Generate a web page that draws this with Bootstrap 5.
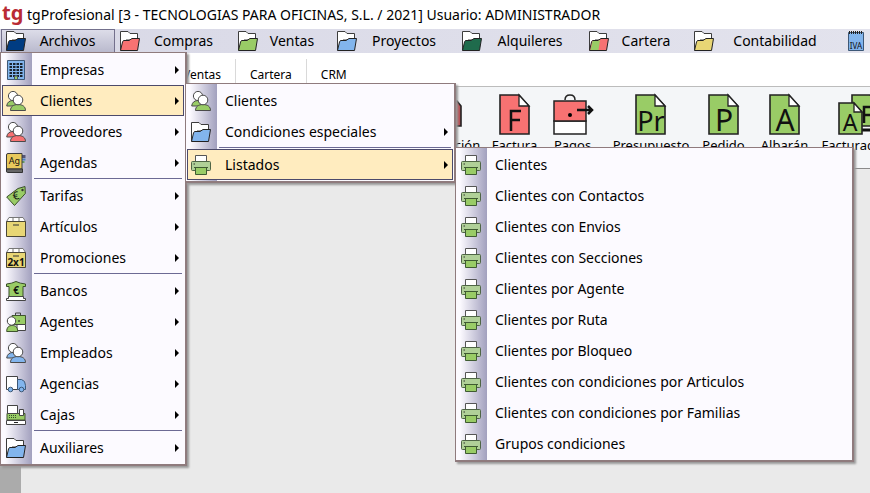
<!DOCTYPE html>
<html lang="es">
<head>
<meta charset="utf-8">
<meta name="viewport" content="width=device-width, initial-scale=1">
<title>tgProfesional</title>
<link href="https://cdn.jsdelivr.net/npm/bootstrap@5.3.0/dist/css/bootstrap.min.css" rel="stylesheet">
<style>
:root { --edge: #8f7b7d; --navy: #4c4a6b; }
body { font-family: "Noto Sans", "Open Sans", sans-serif; font-size: 14px; line-height: 20px; color: #000; background: #eaeaea; overflow: hidden; }
button { font: inherit; color: inherit; background: none; border: 0; padding: 0; white-space: nowrap; }
svg { display: block; flex: none; overflow: visible; }
.ico { width: 20px; height: 20px; }
.navy { color: #003c82; } .red { color: #f77272; } .green { color: #99cc66; } .blue { color: #82b5ed; } .pine { color: #1f6b4c; } .yellow { color: #e8d675; }
.ico text, .ribbon text { fill: #111; }
.titlebar { height: 29px; background: #fff; gap: 4px; padding-left: 2px; }
.titlebar h1 { font-size: 14px; line-height: 20px; font-weight: 400; }
.brand { width: 21px; font-size: 20px; line-height: 28px; padding-bottom: 4px; font-weight: 700; color: #b92b34; }
.menubar { height: 24px; display: grid; grid-template-columns: 114px 118px 99px 125px 127px 105px 153px 28px; padding-left: 1px; background: linear-gradient(90deg, #d8d8e6, #e3e3ed); }
.menubar button { display: flex; align-items: center; padding-left: 5px; height: 24px; }
.menubar button span { flex: 1; text-align: center; padding-right: 6px; }
.menubar .opened { box-shadow: inset 0 0 0 1px #73708c; background: linear-gradient(#dedeea, #b8b8cc); }
.tabstrip { height: 34px; background: #fff; border-bottom: 1px solid #bcbcbc; padding: 6px 0 3px 169px; font-size: 12px; }
.tabstrip button { padding: 6px 14px 0; border-right: 1px solid #d9d9d9; }
.tabstrip button:last-child { border: 0; }
.ribbon { height: 82px; background: #f4f6f8; border-bottom: 1px solid #8a8a8a; padding: 6px 0 0 414px; font-size: 13px; line-height: 16px; overflow: hidden; }
.ribbon button { display: flex; flex-direction: column; align-items: center; flex: none; gap: 2px; height: 64px; }
.ribbon svg { height: 42px; }
.w-s { width: 55px; } .w-m { width: 61px; } .w-l { width: 70px; } .w-xl { width: 84px; }
.rule { width: 1px; height: 68px; background: #bfc1c3; margin: 0 9px 0 0; }
.side { width: 21px; background: #ababab; }
.menu-pane { position: absolute; z-index: 5; list-style: none; margin: 0; padding: 1px; background: linear-gradient(90deg, #fcfaff 4px, #a2a0be 31px, #fcfaff 31px); border: 1px solid var(--edge); border-right-width: 2px; border-bottom-width: 2px; box-shadow: 2px 2px 2px #999; }
.menu-pane li { position: relative; }
.menu-pane button { width: 100%; height: 31px; display: flex; align-items: center; padding: 0 5px 0 4px; gap: 14px; text-align: left; }
.menu-pane button .cap { flex: 1; }
.menu-pane .chosen { background: #ffecbf; outline: 1px solid var(--navy); outline-offset: -1px; }
.arrow::after { content: ""; border: 4px solid transparent; border-left-color: #000; border-right: 0; }
.menu-pane .split { height: 2px; margin: 0 2px 0 32px; border-top: 1px solid #6c6a94; }
.pane-main { left: 0; top: 52px; width: 187px; }
.pane-sub { left: calc(100% + 1px); top: -2px; width: 271px; }
.pane-list { left: calc(100% + 2px); top: -2px; width: 399px; }
</style>
<script src="https://cdn.jsdelivr.net/npm/bootstrap@5.3.0/dist/js/bootstrap.bundle.min.js" defer></script>
</head>
<body class="vh-100 d-flex flex-column position-relative">
<svg width="0" height="0" class="position-absolute" aria-hidden="true">
  <defs>
    <symbol id="folder" viewBox="0 0 20 20"><path d="M.5 19V.5H8l2 2h7.500V9H6L1 19z" fill="#fff" stroke="#3c3c3c"/><path d="M.5 19.500 2.500 11 3.500 9.500H9l3-2h7.500L17.500 19.500z" fill="currentColor" stroke="#222"/></symbol>
    <symbol id="people" viewBox="0 0 20 20"><g stroke="#4a4a4a"><path d="M.7 15C1 11.500 3.500 9.500 7 9.500l4 5.500z" fill="currentColor"/><circle cx="7" cy="5" r="4.600" fill="#fff"/><path d="M4.500 19.500c0-4 3-6 7.500-6s7.500 2 7.500 6z" fill="currentColor"/><circle cx="12" cy="9" r="4.800" fill="#fff"/></g></symbol>
    <symbol id="printer" viewBox="0 0 20 20"><path d="M4.500 7V.5h11V7" fill="#fff" stroke="#555"/><rect x=".5" y="6.500" width="19" height="9" rx="1" fill="#b0d098" stroke="#4f6546"/><path d="M4.500 12.500h11v7h-11z" fill="#99cc66" stroke="#3f5b32"/><path d="M3 12.500h14" stroke="#3f5b32"/><path d="M2.500 9h1.500" stroke="#333"/></symbol>
    <symbol id="building" viewBox="0 0 20 20"><path d="M1.500.5h17v19h-17z" fill="#82b5ed" stroke="#3d5877"/><path d="M3.500 4h13M3.500 7h13M3.500 10h13M3.500 13h13M3.500 16h13" stroke="#18232f" stroke-width="1.800" stroke-dasharray="2.500 1"/><path d="M8.500 16h3v3.500h-3z" fill="#99cc66" stroke="#456"/></symbol>
    <symbol id="agenda" viewBox="0 0 20 20"><path d="M16 2h3.500v3H16z" fill="#557"/><path d="M16 5.500h3.500v2H16z" fill="#4a80c0"/><path d="M16 8h2.500v2H16z" fill="#696"/><path d="M.5 16V2q0-1.500 1.500-1.500h14V16z" fill="#e8c95c" stroke="#3c3c3c"/><path d="M.5 16h16v3.500h-15Q.5 19.500.5 18z" fill="#666" stroke="#333"/></symbol>
    <symbol id="tag" viewBox="0 0 20 20"><path d="M.7 11 12 2.500l7-2 .3 7L8.500 19.500z" fill="#99cc66" stroke="#3a4f2a"/><circle cx="16.500" cy="4" r="1.200" fill="#333"/></symbol>
    <symbol id="box" viewBox="0 0 20 20"><path d="M.5 4.500 3 .5h14l2.500 4zM7 4.500V.5M13 .5v4" fill="#fff" stroke="#777"/><path d="M.5 4.500h19v15H.5z" fill="#e8d675" stroke="#4a4636"/><path d="M7 8h6" stroke="#333"/></symbol>
    <symbol id="bank" viewBox="0 0 20 20"><path d="M.5 5.500v-2.500Q6 2.500 10 .5q4 2 9.500 2.500v2.500H17V16H3V5.500z" fill="#99cc66" stroke="#3a4f2a"/><path d="M2.500 15.500h15v2h2v2H.5v-2h2z" fill="#fff" stroke="#444"/></symbol>
    <symbol id="agent" viewBox="0 0 20 20"><path d="M6 3.500h13.500v9H6z" fill="#99cc66" stroke="#40542f"/><path d="M9.500 3V1h5v2" fill="none" stroke="#444"/><path d="M11 12.500h8.500v6H11z" fill="#fff" stroke="#444"/><circle cx="13" cy="9" r=".8"/><path d="M.7 19.500c0-4 2-6 5.500-6s5.500 2 5.500 6z" fill="#99cc66" stroke="#40542f"/><circle cx="5.500" cy="9" r="4.200" fill="#fff" stroke="#444"/></symbol>
    <symbol id="truck" viewBox="0 0 20 20"><path d="M.5 2.500h11v13H.5z" fill="#fff" stroke="#444"/><path d="M11.500 5.500h4q4 1 4 6v4h-8z" fill="#82b5ed" stroke="#3d5877"/><g fill="#82b5ed" stroke="#3d5877"><circle cx="4.500" cy="15.500" r="2.300"/><circle cx="15.500" cy="15.500" r="2.300"/></g></symbol>
    <symbol id="till" viewBox="0 0 20 20"><path d="M1 8.500h18V15H1z" fill="#99cc66" stroke="#40542f"/><path d="M1.500.5h10v8h-10z" fill="#fff" stroke="#444"/><path d="M13.500 4.500h4v6h-4z" fill="#fff" stroke="#444"/><path d="M3 10.500h8M3 12.500h8" stroke="#33502a" stroke-dasharray="1 1"/><path d="M.5 15.500h19v4H.5z" fill="#fff" stroke="#444"/><path d="M8 17.500h4" stroke="#222"/></symbol>
    <symbol id="sheet" viewBox="0 0 32 42"><path d="M1 2h19l10 11v28H1z" fill="currentColor" stroke="#222" stroke-width="1.600"/><path d="M20 2v11h10z" fill="#fff" stroke="#222" stroke-width="1.300"/></symbol>
  </defs>
</svg>

<header class="titlebar d-flex align-items-center">
  <span class="brand">tg</span>
  <h1 class="m-0">tgProfesional [3 - TECNOLOGIAS PARA OFICINAS, S.L. / 2021] Usuario: ADMINISTRADOR</h1>
</header>

<nav class="menubar" aria-label="Principal">
  <button type="button" class="opened"><svg class="ico navy"><use href="#folder"/></svg><span>Archivos</span></button>
  <button type="button"><svg class="ico red"><use href="#folder"/></svg><span>Compras</span></button>
  <button type="button"><svg class="ico green"><use href="#folder"/></svg><span>Ventas</span></button>
  <button type="button"><svg class="ico blue"><use href="#folder"/></svg><span>Proyectos</span></button>
  <button type="button"><svg class="ico pine"><use href="#folder"/></svg><span>Alquileres</span></button>
  <button type="button"><svg class="ico red" viewBox="0 0 20 20"><use href="#folder"/><path d="M1.500 19 3.500 10H9l2-1L9.500 19z" fill="#99cc66"/></svg><span>Cartera</span></button>
  <button type="button"><svg class="ico yellow"><use href="#folder"/></svg><span>Contabilidad</span></button>
  <button type="button" aria-label="IVA"><svg class="ico" viewBox="0 0 20 20"><path d="M1.500 1.500h15v18h-15z" fill="#82b5ed" stroke="#3d5877"/><path d="M2 1.500h14" stroke="#222" stroke-width="3" stroke-dasharray="1 1"/><text x="9" y="18" text-anchor="middle" font-size="8">IVA</text></svg></button>
</nav>

<div class="tabstrip d-flex">
  <button type="button">Ventas</button><button type="button">Cartera</button><button type="button">CRM</button>
</div>

<div class="ribbon d-flex">
  <button type="button" class="w-l"><svg width="26" viewBox="0 0 26 42"><path d="M1 8h20l4 5v20H1z" fill="#b94d52" stroke="#222" stroke-width="1.600"/></svg>Recepción</button>
  <button type="button" class="w-m"><svg class="red" width="32" viewBox="0 0 32 42"><use href="#sheet"/><path d="M12 38V18h10M12 27h9" fill="none" stroke="#111" stroke-width="2.500"/></svg>Factura</button>
  <button type="button" class="w-s"><svg width="42" viewBox="0 0 42 42"><path d="M13 7q0-5 5-5t5 5" fill="none" stroke="#222" stroke-width="1.500"/><path d="M2 28h32v13H2z" fill="#fff" stroke="#222" stroke-width="1.500"/><path d="M2 8h32v20H2z" fill="#f77272" stroke="#222" stroke-width="1.500"/><circle cx="18" cy="22" r="2"/><path d="M25 17h15M36 13l4 4-4 4" fill="none" stroke="#111" stroke-width="2.500"/></svg>Pagos</button>
  <span class="rule"></span>
  <button type="button" class="w-xl"><svg class="green" width="32" viewBox="0 0 32 42"><use href="#sheet"/><text x="16" y="38" text-anchor="middle" font-size="27">Pr</text></svg>Presupuesto</button>
  <button type="button" class="w-m"><svg class="green" width="32" viewBox="0 0 32 42"><use href="#sheet"/><text x="16" y="38" text-anchor="middle" font-size="30">P</text></svg>Pedido</button>
  <button type="button" class="w-m"><svg class="green" width="32" viewBox="0 0 32 42"><use href="#sheet"/><text x="16" y="38" text-anchor="middle" font-size="30">A</text></svg>Albarán</button>
  <button type="button" class="w-xl"><svg class="green" width="42" viewBox="0 0 42 42"><path d="M16 2h18l9 9v22H16z" fill="currentColor" stroke="#222" stroke-width="1.600"/><path d="M39 14H28v16M28 22h10" fill="none" stroke="#111" stroke-width="2.500"/><path d="M25 37h18" stroke="#111" stroke-width="3"/><path d="M3 10h15l8 9v22H3z" fill="currentColor" stroke="#222" stroke-width="1.600"/><path d="M18 10v9h8z" fill="#fff" stroke="#222" stroke-width="1.300"/><text x="14" y="38" text-anchor="middle" font-size="23">A</text></svg>Facturación</button>
</div>

<main class="flex-grow-1 d-flex"><div class="side"></div></main>

<ul class="menu-pane pane-main">
  <li><button type="button" class="arrow"><svg class="ico"><use href="#building"/></svg><span class="cap">Empresas</span></button></li>
  <li><button type="button" class="arrow chosen"><svg class="ico green"><use href="#people"/></svg><span class="cap">Clientes</span></button>
    <ul class="menu-pane pane-sub">
      <li><button type="button"><svg class="ico green"><use href="#people"/></svg><span class="cap">Clientes</span></button></li>
      <li><button type="button" class="arrow"><svg class="ico blue"><use href="#folder"/></svg><span class="cap">Condiciones especiales</span></button></li>
      <li class="split"></li>
      <li><button type="button" class="arrow chosen"><svg class="ico"><use href="#printer"/></svg><span class="cap">Listados</span></button>
        <ul class="menu-pane pane-list">
          <li><button type="button"><svg class="ico"><use href="#printer"/></svg><span class="cap">Clientes</span></button></li>
          <li><button type="button"><svg class="ico"><use href="#printer"/></svg><span class="cap">Clientes con Contactos</span></button></li>
          <li><button type="button"><svg class="ico"><use href="#printer"/></svg><span class="cap">Clientes con Envios</span></button></li>
          <li><button type="button"><svg class="ico"><use href="#printer"/></svg><span class="cap">Clientes con Secciones</span></button></li>
          <li><button type="button"><svg class="ico"><use href="#printer"/></svg><span class="cap">Clientes por Agente</span></button></li>
          <li><button type="button"><svg class="ico"><use href="#printer"/></svg><span class="cap">Clientes por Ruta</span></button></li>
          <li><button type="button"><svg class="ico"><use href="#printer"/></svg><span class="cap">Clientes por Bloqueo</span></button></li>
          <li><button type="button"><svg class="ico"><use href="#printer"/></svg><span class="cap">Clientes con condiciones por Articulos</span></button></li>
          <li><button type="button"><svg class="ico"><use href="#printer"/></svg><span class="cap">Clientes con condiciones por Familias</span></button></li>
          <li><button type="button"><svg class="ico"><use href="#printer"/></svg><span class="cap">Grupos condiciones</span></button></li>
        </ul>
      </li>
    </ul>
  </li>
  <li><button type="button" class="arrow"><svg class="ico red"><use href="#people"/></svg><span class="cap">Proveedores</span></button></li>
  <li><button type="button" class="arrow"><svg class="ico" viewBox="0 0 20 20"><use href="#agenda"/><text x="8.500" y="11" text-anchor="middle" font-size="9">Ag</text></svg><span class="cap">Agendas</span></button></li>
  <li class="split"></li>
  <li><button type="button" class="arrow"><svg class="ico" viewBox="0 0 20 20"><use href="#tag"/><text x="10" y="13.500" text-anchor="middle" font-size="11" transform="rotate(-15 10 10)">€</text></svg><span class="cap">Tarifas</span></button></li>
  <li><button type="button" class="arrow"><svg class="ico"><use href="#box"/></svg><span class="cap">Artículos</span></button></li>
  <li><button type="button" class="arrow"><svg class="ico" viewBox="0 0 20 20"><use href="#box"/><text x="10" y="18" text-anchor="middle" font-size="10" font-weight="700">2x1</text></svg><span class="cap">Promociones</span></button></li>
  <li class="split"></li>
  <li><button type="button" class="arrow"><svg class="ico" viewBox="0 0 20 20"><use href="#bank"/><text x="10" y="13" text-anchor="middle" font-size="10" font-weight="700">€</text></svg><span class="cap">Bancos</span></button></li>
  <li><button type="button" class="arrow"><svg class="ico"><use href="#agent"/></svg><span class="cap">Agentes</span></button></li>
  <li><button type="button" class="arrow"><svg class="ico blue"><use href="#people"/></svg><span class="cap">Empleados</span></button></li>
  <li><button type="button" class="arrow"><svg class="ico"><use href="#truck"/></svg><span class="cap">Agencias</span></button></li>
  <li><button type="button" class="arrow"><svg class="ico"><use href="#till"/></svg><span class="cap">Cajas</span></button></li>
  <li class="split"></li>
  <li><button type="button" class="arrow"><svg class="ico blue"><use href="#folder"/></svg><span class="cap">Auxiliares</span></button></li>
</ul>
</body>
</html>
